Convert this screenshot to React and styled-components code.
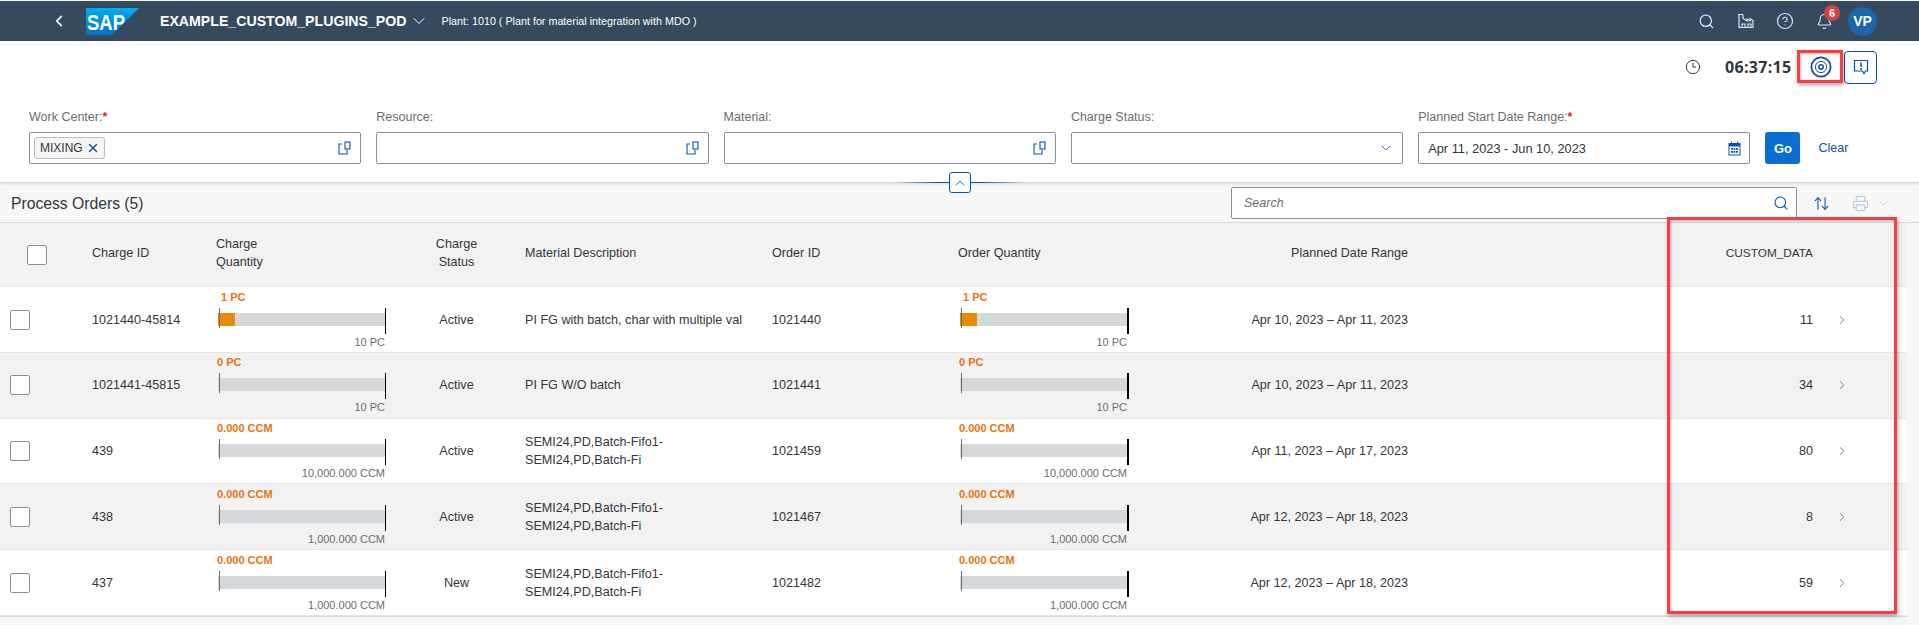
import styled, { createGlobalStyle } from "styled-components";
import {
  ArrowUpDown,
  ChevronDown,
  ChevronLeft,
  ChevronRight,
  ChevronUp,
  CircleHelp,
  Clock3,
  Bell,
  Printer,
  Search,
  X,
} from "lucide-react";

const GlobalStyle = createGlobalStyle`
  html, body {
    margin: 0;
    padding: 0;
    background: #f7f7f7;
    font-family: "Liberation Sans", Arial, sans-serif;
    color: #32363a;
  }
  * { box-sizing: border-box; }
`;

const Page = styled.div`
  position: relative;
  width: 1919px;
  height: 625px;
  overflow: hidden;
  padding-top: 1px;
  background: #f7f7f7;
`;

const ShellBar = styled.header`
  height: 40px;
  background: #354a5f;
  display: flex;
  align-items: center;
  padding: 0 42px 0 50px;
  color: #fff;
`;

const BackButton = styled.span`
  display: flex;
  width: 36px;
  color: #d1e8ff;
`;

const AppTitle = styled.span`
  margin: 0 3px 0 21px;
  font-size: 14.15px;
  font-weight: 700;
`;

const PlantText = styled.span`
  margin-left: 12px;
  font-size: 10.75px;
`;

const ShellActions = styled.div`
  margin-left: auto;
  display: flex;
  align-items: center;
  gap: 22px;
  color: #d1e8ff;
`;

const BellWrap = styled.span`
  position: relative;
  display: flex;
`;

const Badge = styled.span`
  position: absolute;
  top: -8px;
  left: 8px;
  width: 16px;
  height: 16px;
  border-radius: 50%;
  background: #d04343;
  color: #fff;
  font-size: 11px;
  font-weight: 700;
  line-height: 16px;
  text-align: center;
`;

const Avatar = styled.span`
  width: 29px;
  height: 29px;
  margin-left: -7px;
  border-radius: 50%;
  background: #1e64ab;
  color: #fff;
  font-size: 14px;
  font-weight: 700;
  line-height: 29px;
  text-align: center;
`;

const FilterArea = styled.section`
  position: relative;
  height: 142px;
  background: #fff;
  border-bottom: 1px solid #d9d9d9;
  box-shadow: 0 1px 3px rgba(0, 0, 0, 0.12);
`;

const ToolRow = styled.div`
  height: 52px;
  display: flex;
  align-items: center;
  justify-content: flex-end;
  padding: 0 42px 0 0;
`;

const ClockIcon = styled.span`
  display: flex;
  margin-right: 24px;
  color: #32363a;
`;

const Time = styled.span`
  font-family: "Open Sans", sans-serif;
  font-size: 16px;
  font-weight: 700;
  letter-spacing: 0.3px;
  width: 72px;
`;

const TargetButton = styled.span`
  display: flex;
  align-items: center;
  justify-content: center;
  width: 47px;
  height: 33px;
`;

const FeedbackButton = styled.span`
  display: flex;
  align-items: center;
  justify-content: center;
  width: 33px;
  height: 33px;
  border: 1px solid #0854a0;
  border-radius: 4px;
`;

const FilterRow = styled.div`
  display: grid;
  grid-template-columns: repeat(5, 332.3px) 35px auto;
  column-gap: 15px;
  align-items: end;
  padding: 16px 0 0 29px;
`;

const Field = styled.div`
  display: flex;
  flex-direction: column;
  gap: 7px;
`;

const FieldLabel = styled.label`
  font-size: 12.5px;
  line-height: 16px;
  color: #6a6d70;

  em {
    color: #c8342c;
    font-style: normal;
    font-weight: 700;
  }
`;

const InputBox = styled.div`
  height: 32px;
  display: flex;
  align-items: center;
  justify-content: space-between;
  padding: 0 8px 0 ${(p) => p.$left || 4}px;
  background: #fff;
  border: 1px solid #89919a;
  border-radius: 2px;
  font-size: 12.8px;
`;

const Token = styled.span`
  display: inline-flex;
  align-items: center;
  gap: 3px;
  height: 22px;
  padding: 0 4px 0 5px;
  background: #f5f5f5;
  border: 1px solid #b8bec4;
  border-radius: 3px;
  font-size: 12px;
`;

const GoButton = styled.button`
  height: 32px;
  width: 35px;
  padding: 0;
  border: 0;
  border-radius: 3px;
  background: #0a6ed1;
  color: #fff;
  font: 700 13px "Liberation Sans", Arial, sans-serif;
`;

const ClearLink = styled.span`
  align-self: center;
  margin-top: 23px;
  margin-left: 3px;
  font-size: 12.5px;
  color: #0854a0;
`;

const CollapseLine = styled.div`
  position: absolute;
  left: 893px;
  bottom: -1px;
  width: 133px;
  height: 1px;
  background: linear-gradient(90deg, transparent, #0854a0 35%, #0854a0 65%, transparent);
`;

const CollapseButton = styled.span`
  position: absolute;
  left: 949px;
  bottom: -11px;
  width: 22px;
  height: 21px;
  display: flex;
  align-items: center;
  justify-content: center;
  background: #fff;
  border: 1px solid #0854a0;
  border-radius: 3px;
  color: #0854a0;
  z-index: 1;
`;

const TitleBar = styled.div`
  height: 40px;
  display: flex;
  align-items: flex-start;
  padding: 0 0 0 11px;
  background: #f7f7f7;
  border-bottom: 1px solid #d9d9d9;
`;

const TableTitle = styled.h2`
  margin: 0;
  flex: 1;
  font-size: 15.7px;
  font-weight: 400;
  line-height: 41px;
`;

const SearchBox = styled.div`
  width: 566px;
  height: 32px;
  margin-top: 4px;
  display: flex;
  align-items: center;
  justify-content: space-between;
  padding: 0 7px 0 12px;
  background: #fff;
  border: 1px solid #89919a;
  border-radius: 2px;
  font-size: 12.5px;
  font-style: italic;
  color: #6a6d70;
`;

const TableTools = styled.div`
  width: 122px;
  height: 40px;
  display: flex;
  align-items: center;
  padding-left: 16px;
  color: #0854a0;
`;

const Table = styled.div`
  width: 1907px;
`;

const gridColumns = "92px 124px 187px 107px 262px 186px 190px 260px 405px 94px";

const HeaderRow = styled.div`
  height: 64px;
  display: grid;
  grid-template-columns: ${gridColumns};
  align-items: center;
  background: #f2f2f2;
  border-bottom: 1px solid #e5e5e5;
  font-size: 12.6px;
  line-height: 18px;
`;

const Row = styled.div`
  height: 65.8px;
  display: grid;
  grid-template-columns: ${gridColumns};
  align-items: center;
  padding-top: ${(p) => (p.$first ? 1 : 0)}px;
  background: ${(p) => (p.$alt ? "#f2f2f2" : "#fff")};
  border-bottom: 1px solid #e5e5e5;
  font-size: 12.6px;
  line-height: 18px;
`;

const Cell = styled.div`
  padding-left: ${(p) => p.$pad || 0}px;
  text-align: ${(p) => p.$align || "left"};
`;

const HeaderCell = styled(Cell)`
  padding-bottom: 4px;
  font-size: ${(p) => p.$size || 12.6}px;
`;

const CheckBox = styled.span`
  display: block;
  width: 20px;
  height: 20px;
  margin-left: ${(p) => p.$left}px;
  background: #fff;
  border: 1px solid #89919a;
  border-radius: 2px;
`;

const Arrow = styled.span`
  display: flex;
  padding-left: 22px;
  color: #5c6670;
`;

const Micro = styled.div`
  display: flex;
  flex-direction: column;
  width: 170px;
`;

const MicroValue = styled.span`
  height: 13px;
  margin-left: ${(p) => p.$offset}px;
  font-size: 11px;
  font-weight: 700;
  line-height: 13px;
  color: #e9730c;
`;

const MicroTrack = styled.div`
  position: relative;
  width: 167px;
  height: 26px;
  margin: 4px 0 2px 2px;
`;

const MicroBar = styled.div`
  position: absolute;
  top: 5px;
  left: 0;
  width: 100%;
  height: 13px;
  background: #d5d8da;
`;

const MicroFill = styled.div`
  height: 100%;
  background: #e78c07;
`;

const StartTick = styled.span`
  position: absolute;
  top: 0;
  left: 1px;
  width: 1px;
  height: 20px;
  background: #6a6d70;
`;

const EndTick = styled.span`
  position: absolute;
  top: 0;
  left: 100%;
  width: ${(p) => p.$w}px;
  height: 26px;
  background: #000;
`;

const MicroMax = styled.span`
  width: 169px;
  height: 13px;
  font-size: 11px;
  line-height: 13px;
  text-align: right;
  color: #6a6d70;
`;

const Footer = styled.div`
  height: 9px;
  width: 1907px;
  background: #f5f5f5;
  border-top: 1px solid #d9d9d9;
`;

const Highlight = styled.div`
  position: absolute;
  left: ${(p) => p.$x}px;
  top: ${(p) => p.$y}px;
  width: ${(p) => p.$w}px;
  height: ${(p) => p.$h}px;
  border: 3px solid #f44040;
  box-shadow: 1px 2px 4px rgba(0, 0, 0, 0.35), inset 1px 1px 3px rgba(0, 0, 0, 0.3);
  pointer-events: none;
`;

const SapLogo = () => (
  <svg width="53" height="27" viewBox="0 0 53 27">
    <defs>
      <linearGradient id="sapBlue" x1="0" y1="0" x2="0" y2="1">
        <stop offset="0" stopColor="#00aeef" />
        <stop offset="1" stopColor="#0a6fc2" />
      </linearGradient>
    </defs>
    <path d="M0 0H53L26 27H0Z" fill="url(#sapBlue)" />
    <text x="1" y="21.5" fontFamily="Liberation Sans" fontSize="22" fontWeight="700" fill="#fff" textLength="38" lengthAdjust="spacingAndGlyphs">
      SAP
    </text>
  </svg>
);

const FactoryIcon = () => (
  <svg width="17" height="16" viewBox="0 0 17 16" fill="none" stroke="currentColor" strokeWidth="1.2">
    <path d="M1 1.5H6M2 1.5V14.5H16V7.5L13 5.5V8L10 6V8L6 5.5V1.5" />
    <path d="M5 14.5V11H8V14.5M11 14.5V11H14V14.5" />
  </svg>
);

const TargetIcon = () => (
  <svg width="22" height="22" viewBox="0 0 22 22" fill="none" stroke="#0854a0">
    <circle cx="11" cy="11" r="9.6" strokeWidth="1.8" />
    <circle cx="11" cy="11" r="5.6" strokeWidth="1" />
    <circle cx="11" cy="11" r="2.2" strokeWidth="1.5" />
  </svg>
);

const FeedbackIcon = () => (
  <svg width="16" height="16" viewBox="0 0 16 16" fill="none" stroke="#0854a0" strokeWidth="1.2">
    <path d="M1.5 1.5H14.5V12H12.5L11 14.5L9.5 12H1.5Z" />
    <path d="M8 3.5V8M8 9V10.8" strokeWidth="1.6" />
  </svg>
);

const CopyIcon = () => (
  <svg width="14" height="14" viewBox="0 0 14 14" fill="none" stroke="#0854a0" strokeWidth="1.1">
    <path d="M4 3H1V13H9V9" />
    <rect x="7" y="1" width="5" height="7" />
  </svg>
);

const CalendarIcon = () => (
  <svg width="13" height="15" viewBox="0 0 13 15" fill="#0854a0">
    <path d="M0.5 2H3V0.5H4V2H9V0.5H10V2H12.5V14.5H0.5ZM1.5 5.5V13.5H11.5V5.5Z" />
    <path d="M3 7H5V8.7H3ZM5.6 7H7.4V8.7H5.6ZM8 7H10V8.7H8ZM3 10H5V11.7H3ZM5.6 10H7.4V11.7H5.6ZM8 10H10V11.7H8Z" />
  </svg>
);

const QuantityBar = ({ value, offset, max, fill, tick }) => (
  <Micro>
    <MicroValue $offset={offset}>{value}</MicroValue>
    <MicroTrack>
      <MicroBar>{fill ? <MicroFill style={{ width: `${fill}%` }} /> : null}</MicroBar>
      <StartTick />
      <EndTick $w={tick} />
    </MicroTrack>
    <MicroMax>{max}</MicroMax>
  </Micro>
);

const batchText = (
  <>
    SEMI24,PD,Batch-Fifo1-
    <br />
    SEMI24,PD,Batch-Fi
  </>
);

const orders = [
  { id: "1021440-45814", value: "1 PC", offset: 5, max: "10 PC", fill: 10, status: "Active", material: "PI FG with batch, char with multiple val", order: "1021440", dates: "Apr 10, 2023 – Apr 11, 2023", custom: 11 },
  { id: "1021441-45815", value: "0 PC", offset: 1, max: "10 PC", status: "Active", material: "PI FG W/O batch", order: "1021441", dates: "Apr 10, 2023 – Apr 11, 2023", custom: 34 },
  { id: "439", value: "0.000 CCM", offset: 1, max: "10,000.000 CCM", status: "Active", material: batchText, order: "1021459", dates: "Apr 11, 2023 – Apr 17, 2023", custom: 80 },
  { id: "438", value: "0.000 CCM", offset: 1, max: "1,000.000 CCM", status: "Active", material: batchText, order: "1021467", dates: "Apr 12, 2023 – Apr 18, 2023", custom: 8 },
  { id: "437", value: "0.000 CCM", offset: 1, max: "1,000.000 CCM", status: "New", material: batchText, order: "1021482", dates: "Apr 12, 2023 – Apr 18, 2023", custom: 59 },
];

export default function App() {
  return (
    <Page>
      <GlobalStyle />
      <ShellBar>
        <BackButton>
          <ChevronLeft size={18} strokeWidth={2.4} />
        </BackButton>
        <SapLogo />
        <AppTitle>EXAMPLE_CUSTOM_PLUGINS_POD</AppTitle>
        <ChevronDown size={20} strokeWidth={1.2} />
        <PlantText>Plant: 1010 ( Plant for material integration with MDO )</PlantText>
        <ShellActions>
          <Search size={17} strokeWidth={1.8} />
          <FactoryIcon />
          <CircleHelp size={18} strokeWidth={1.6} />
          <BellWrap>
            <Bell size={17} strokeWidth={1.5} />
            <Badge>6</Badge>
          </BellWrap>
          <Avatar>VP</Avatar>
        </ShellActions>
      </ShellBar>

      <FilterArea>
        <ToolRow>
          <ClockIcon>
            <Clock3 size={16} strokeWidth={1.5} />
          </ClockIcon>
          <Time>06:37:15</Time>
          <TargetButton>
            <TargetIcon />
          </TargetButton>
          <FeedbackButton>
            <FeedbackIcon />
          </FeedbackButton>
        </ToolRow>
        <FilterRow>
          <Field>
            <FieldLabel>Work Center:<em>*</em></FieldLabel>
            <InputBox>
              <Token>
                MIXING
                <X size={14} strokeWidth={2.4} color="#0854a0" />
              </Token>
              <CopyIcon />
            </InputBox>
          </Field>
          <Field>
            <FieldLabel>Resource:</FieldLabel>
            <InputBox>
              <span />
              <CopyIcon />
            </InputBox>
          </Field>
          <Field>
            <FieldLabel>Material:</FieldLabel>
            <InputBox>
              <span />
              <CopyIcon />
            </InputBox>
          </Field>
          <Field>
            <FieldLabel>Charge Status:</FieldLabel>
            <InputBox>
              <span />
              <ChevronDown size={16} strokeWidth={1.2} color="#0854a0" />
            </InputBox>
          </Field>
          <Field>
            <FieldLabel>Planned Start Date Range:<em>*</em></FieldLabel>
            <InputBox $left={9}>
              Apr 11, 2023 - Jun 10, 2023
              <CalendarIcon />
            </InputBox>
          </Field>
          <GoButton>Go</GoButton>
          <ClearLink>Clear</ClearLink>
        </FilterRow>
        <CollapseLine />
        <CollapseButton>
          <ChevronUp size={16} strokeWidth={1.2} />
        </CollapseButton>
      </FilterArea>

      <TitleBar>
        <TableTitle>Process Orders (5)</TableTitle>
        <SearchBox>
          Search
          <Search size={16} strokeWidth={1.6} color="#0854a0" />
        </SearchBox>
        <TableTools>
          <ArrowUpDown size={17} strokeWidth={1.5} />
          <Printer size={17} strokeWidth={1.4} color="#a9c3de" style={{ marginLeft: 22 }} />
          <ChevronDown size={13} strokeWidth={1.4} color="#a9c3de" style={{ marginLeft: 8 }} />
        </TableTools>
      </TitleBar>

      <Table>
        <HeaderRow>
          <Cell><CheckBox $left={27} /></Cell>
          <HeaderCell>Charge ID</HeaderCell>
          <HeaderCell>Charge<br />Quantity</HeaderCell>
          <HeaderCell $align="center">Charge<br />Status</HeaderCell>
          <HeaderCell $pad={15}>Material Description</HeaderCell>
          <HeaderCell>Order ID</HeaderCell>
          <HeaderCell>Order Quantity</HeaderCell>
          <HeaderCell $align="right">Planned Date Range</HeaderCell>
          <HeaderCell $align="right" $size={11.8}>CUSTOM_DATA</HeaderCell>
          <Cell />
        </HeaderRow>
        {orders.map((o, i) => (
          <Row key={o.id} $alt={i % 2 === 1} $first={i === 0}>
            <Cell><CheckBox $left={10} /></Cell>
            <Cell>{o.id}</Cell>
            <Cell>
              <QuantityBar value={o.value} offset={o.offset} max={o.max} fill={o.fill} tick={1} />
            </Cell>
            <Cell $align="center">{o.status}</Cell>
            <Cell $pad={15}>{o.material}</Cell>
            <Cell>{o.order}</Cell>
            <Cell>
              <QuantityBar value={o.value} offset={o.offset} max={o.max} fill={o.fill} tick={2} />
            </Cell>
            <Cell $align="right">{o.dates}</Cell>
            <Cell $align="right">{o.custom}</Cell>
            <Arrow><ChevronRight size={14} strokeWidth={1.4} /></Arrow>
          </Row>
        ))}
      </Table>
      <Footer />

      <Highlight $x={1797} $y={50} $w={46} $h={33} />
      <Highlight $x={1667} $y={217} $w={230} $h={397} />
    </Page>
  );
}
